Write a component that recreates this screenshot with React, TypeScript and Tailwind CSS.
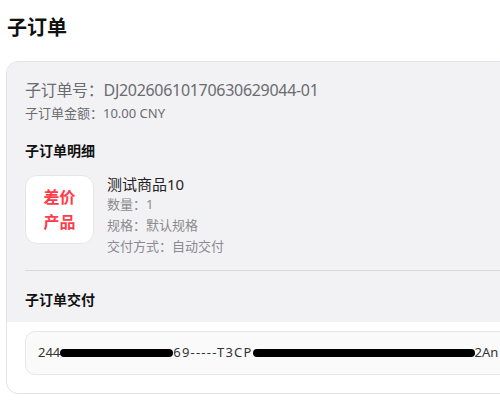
const font = "font-['Noto_Sans','Noto_Sans_CJK_SC',sans-serif]";

function Redacted({ width }: { width: number }) {
  return <span className="inline-block h-[8px] rounded-full bg-black align-middle" style={{ width }} />;
}

export default function App() {
  return (
    <div className={`h-[400px] w-[500px] overflow-hidden bg-white ${font}`}>
      <h1 className="pl-[7px] pt-[14px] text-[20px] font-bold leading-[28px] text-[#111]">子订单</h1>

      <section className="ml-[6px] mt-[19px] w-[540px] overflow-hidden rounded-[12px] border border-[#e3e3e6] bg-white">
        <div className="bg-[#f2f2f4] px-[18px] pb-[12px] pt-[17px]">
          <p className="text-[16px] leading-[22px] tracking-[-0.3px] text-[#6b6b70]">子订单号：DJ20260610170630629044-01</p>
          <p className="mt-[3px] text-[13px] leading-[18px] text-[#6b6b70]">子订单金额：10.00 CNY</p>

          <h2 className="mt-[19px] text-[14px] font-bold leading-[20px] text-[#111]">子订单明细</h2>
          <div className="mt-[14px] flex gap-[13px]">
            <div className="grid h-[69px] w-[69px] shrink-0 place-items-center rounded-[12px] border border-[#e6e6e8] bg-white">
              <span className="text-center text-[16px] font-bold leading-[25px] text-[#ff3b4a]">差价<br />产品</span>
            </div>
            <div>
              <p className="text-[15px] leading-[19px] text-[#222]">测试商品10</p>
              <p className="text-[13px] leading-[21px] text-[#8a8a8f]">数量：1</p>
              <p className="text-[13px] leading-[21px] text-[#8a8a8f]">规格：默认规格</p>
              <p className="text-[13px] leading-[21px] text-[#8a8a8f]">交付方式：自动交付</p>
            </div>
          </div>

          <div className="mt-[13px] h-px bg-[#d9d9dc]" />

          <h2 className="mt-[19px] text-[14px] font-bold leading-[20px] text-[#111]">子订单交付</h2>
        </div>

        <div className="px-[18px] pb-[18px] pt-[9px]">
          <div className="flex h-[44px] items-center whitespace-nowrap rounded-[10px] border border-[#e6e6e8] bg-[#fafafa] px-[12px] text-[13px] text-[#333]">
            <span>244</span>
            <Redacted width={113} />
            <span className="tracking-[1.2px]">69-----T3CP</span>
            <Redacted width={222} />
            <span>2An</span>
          </div>
        </div>
      </section>
    </div>
  );
}
